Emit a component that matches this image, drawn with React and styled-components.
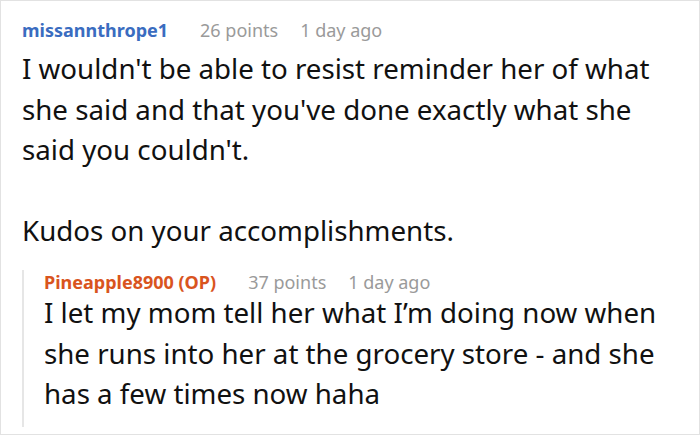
import styled, { createGlobalStyle } from "styled-components";

const GlobalStyle = createGlobalStyle`
  html, body {
    margin: 0;
    padding: 0;
    background: #fff;
  }
  body {
    font-family: "Noto Sans", "Open Sans", sans-serif;
    color: #111;
  }
`;

const Frame = styled.section`
  box-sizing: border-box;
  width: 700px;
  height: 435px;
  border: 1px solid #e2e2e2;
  padding: 17px 20px 0 21px;
  overflow: hidden;
`;

const Meta = styled.div`
  display: flex;
  align-items: baseline;
  gap: 22px;
  font-size: 18px;
  line-height: 24px;
  margin-bottom: ${(p) => p.$gap || 6}px;
`;

const Author = styled.span`
  font-weight: 700;
  color: ${(p) => (p.$op ? "#d9541e" : "#3a6cc0")};
  margin-right: 10px;
`;

const Info = styled.span`
  color: #9a9a9a;
`;

const Body = styled.p`
  margin: 0 0 ${(p) => p.$after || 0}px;
  font-size: 27.7px;
  line-height: 40.5px;
`;

const Reply = styled.div`
  margin-top: 19.5px;
  border-left: 2px solid #e6e6e6;
  padding: 0 0 13px 20px;
`;

function Comment({ author, op, points, time, gap, children }) {
  return (
    <>
      <Meta $gap={gap}>
        <Author $op={op}>{author}</Author>
        <Info>{points} points</Info>
        <Info>{time}</Info>
      </Meta>
      {children}
    </>
  );
}

export default function App() {
  return (
    <>
      <GlobalStyle />
      <Frame>
        <Comment author="missannthrope1" points={26} time="1 day ago">
          <Body $after={40.5}>
            I wouldn't be able to resist reminder her of what she said and
            that you've done exactly what she said you couldn't.
          </Body>
          <Body>Kudos on your accomplishments.</Body>
        </Comment>
        <Reply>
          <Comment
            author="Pineapple8900 (OP)"
            op
            points={37}
            time="1 day ago"
            gap={-2}
          >
            <Body>
              I let my mom tell her what I’m doing now when she runs into her
              at the grocery store - and she has a few times now haha
            </Body>
          </Comment>
        </Reply>
      </Frame>
    </>
  );
}
